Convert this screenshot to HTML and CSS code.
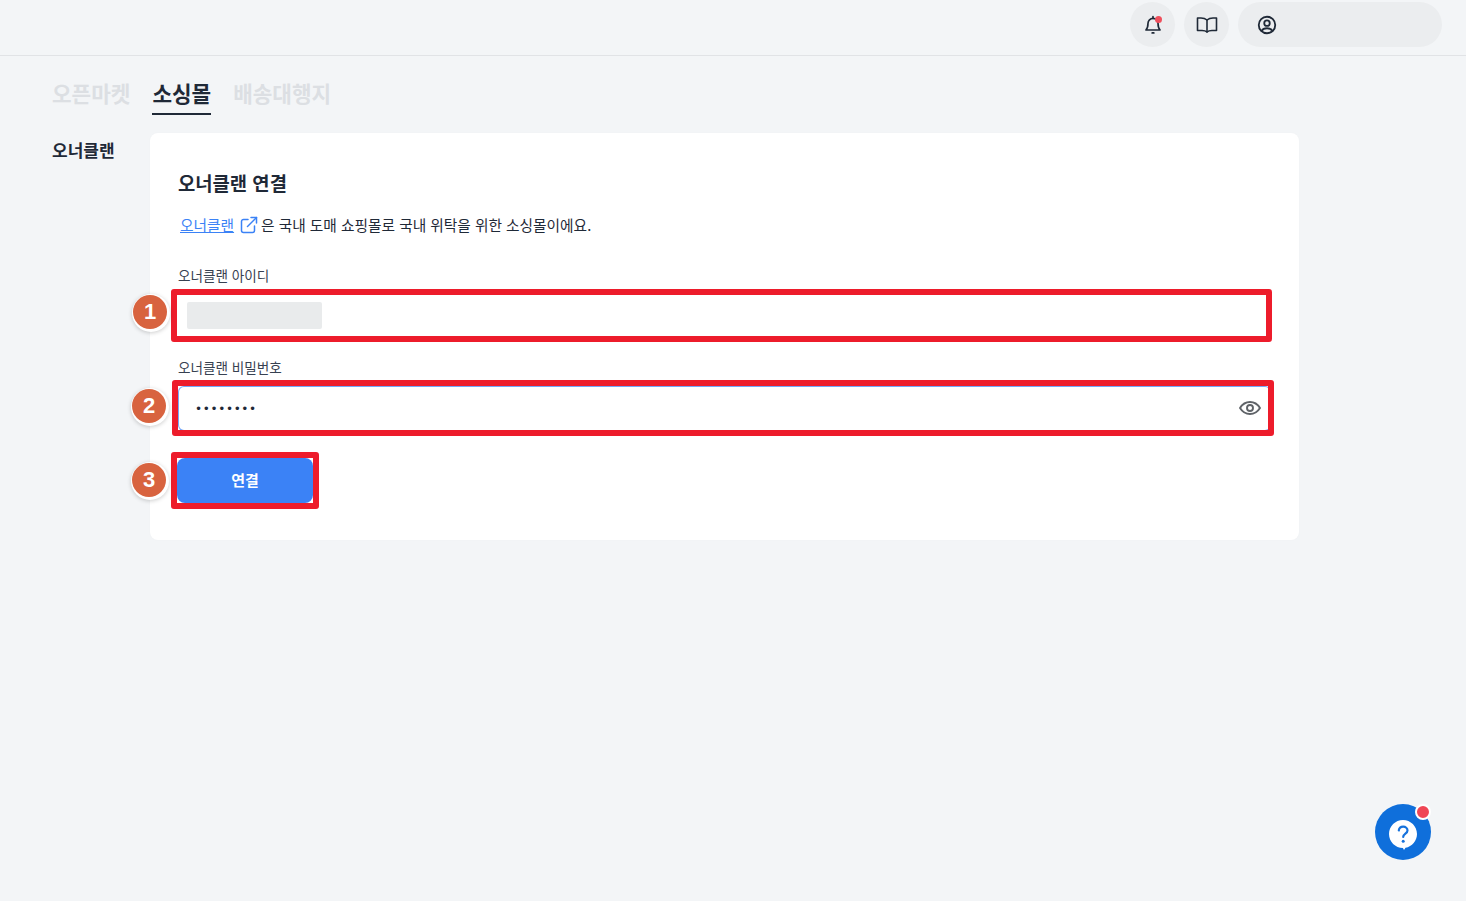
FILE: index.html
```html
<!DOCTYPE html>
<html lang="ko">
<head>
<meta charset="utf-8">
<title>오너클랜 연결</title>
<link rel="stylesheet" href="styles.css">
</head>
<body>
<header class="topbar">
  <button class="round-btn bell" aria-label="알림">
    <svg width="20" height="20" viewBox="0 0 24 24" fill="none" stroke="#1f2937" stroke-width="2" stroke-linecap="round" stroke-linejoin="round"><path d="M12 4a6 6 0 0 0-6 6c0 5-1.500 7-2.500 8h17c-1-1-2.500-3-2.500-8a6 6 0 0 0-6-6z"/><path d="M12 2v2"/><path d="M11 21.500h2"/></svg>
    <span class="bell-dot"></span>
  </button>
  <button class="round-btn" aria-label="가이드">
    <svg width="22" height="16" viewBox="0 0 22 16" fill="none" stroke="#1f2937" stroke-width="1.600" stroke-linecap="round" stroke-linejoin="round"><path d="M11 3C9.500 1.700 7.500 1 5 1H1.500v12.500H6c2 0 3.800.4 5 1.500 1.200-1.100 3-1.500 5-1.500h4.500V1H17c-2.500 0-4.500.7-6 2z"/><path d="M11 3v12"/></svg>
  </button>
  <button class="user-pill" aria-label="계정">
    <svg width="22" height="22" viewBox="0 0 24 24" fill="none" stroke="#1f2937" stroke-width="2" stroke-linecap="round" stroke-linejoin="round"><circle cx="12" cy="12" r="9"/><circle cx="12" cy="10" r="3"/><path d="M6.200 18.500c1-2 3-3 5.800-3s4.800 1 5.800 3"/></svg>
  </button>
</header>

<nav class="tabs">
  <a class="tab">오픈마켓</a>
  <a class="tab active">소싱몰</a>
  <a class="tab">배송대행지</a>
</nav>

<main class="content">
  <aside class="side-label">오너클랜</aside>
  <section class="card">
    <h1 class="card-title">오너클랜 연결</h1>
    <p class="desc">
      <a class="link">오너클랜</a>
      <svg class="ext" width="18" height="18" viewBox="0 0 18 18" fill="none" stroke="#3b82f6" stroke-width="1.500" stroke-linecap="round" stroke-linejoin="round"><path d="M8 3.500H3.500a2 2 0 0 0-2 2v9a2 2 0 0 0 2 2h9a2 2 0 0 0 2-2V10"/><path d="M11 1.500h5.500V7"/><path d="M16.500 1.500L7.500 10.500"/></svg>
      <span>은 국내 도매 쇼핑몰로 국내 위탁을 위한 소싱몰이에요.</span>
    </p>

    <div class="field first">
      <label class="field-label">오너클랜 아이디</label>
      <div class="input">
        <span class="mask"></span>
        <span class="red-box box-1"></span>
        <span class="badge badge-1">1</span>
      </div>
    </div>

    <div class="field second">
      <label class="field-label">오너클랜 비밀번호</label>
      <div class="input focused">
        <span class="dots">••••••••</span>
        <svg class="eye" width="24" height="24" viewBox="0 0 24 24" fill="none" stroke="#5f6368" stroke-width="1.900" stroke-linecap="round" stroke-linejoin="round"><path d="M2 12c2.500-4 6-6 10-6s7.500 2 10 6c-2.500 4-6 6-10 6s-7.500-2-10-6z"/><circle cx="12" cy="12" r="3"/></svg>
        <span class="red-box box-2"></span>
        <span class="badge badge-2">2</span>
      </div>
    </div>

    <div class="action">
      <button class="connect">연결</button>
      <span class="red-box box-3"></span>
      <span class="badge badge-3">3</span>
    </div>
  </section>
</main>

<button class="help" aria-label="도움말">
  <svg width="30" height="32" viewBox="0 0 30 32"><path d="M15 1C7.300 1 1 7.300 1 15s6.300 14 14 14l-.1 0 1.100 2 1.500-2.200C24 27.600 29 21.800 29 15 29 7.300 22.700 1 15 1z" fill="#fff"/><path d="M10.800 11.500c.3-2.400 2-3.800 4.400-3.800 2.400 0 4.300 1.500 4.300 3.700 0 3.200-4.300 3.200-4.300 6.600" fill="none" stroke="#1672dc" stroke-width="2.200" stroke-linecap="round"/><circle cx="15.200" cy="22.300" r="1.500" fill="#1672dc"/></svg>
  <span class="help-dot"></span>
</button>
</body>
</html>
```

FILE: styles.css
```css
* { box-sizing: border-box; }
html, body { margin: 0; padding: 0; height: 100%; }
body {
  background: #f3f5f7;
  color: #1f2937;
  font-family: "Noto Sans CJK KR", "Noto Sans", sans-serif;
  overflow: hidden;
}
button { border: 0; padding: 0; font: inherit; cursor: pointer; }

.topbar {
  height: 56px;
  border-bottom: 1px solid #e1e3e6;
  display: flex;
  justify-content: flex-end;
  align-items: flex-start;
  gap: 9px;
  padding: 2px 24px 0 0;
}
.round-btn {
  position: relative;
  width: 45px;
  height: 45px;
  border-radius: 50%;
  background: #ebedef;
  display: flex;
  align-items: center;
  justify-content: center;
}
.bell-dot {
  position: absolute;
  top: 14px;
  left: 25px;
  width: 7px;
  height: 7px;
  border-radius: 50%;
  background: #ef4f5c;
}
.user-pill {
  width: 204px;
  height: 45px;
  border-radius: 23px;
  background: #ebedef;
  display: flex;
  align-items: center;
  padding-left: 18px;
}

.tabs {
  display: flex;
  gap: 22px;
  padding: 22px 0 0 52px;
  height: 77px;
}
.tab {
  font-size: 21.300px;
  font-weight: 700;
  line-height: 29px;
  height: 37px;
  color: #dcdfe3;
}
.tab.active {
  color: #1f2937;
  border-bottom: 2px solid #1f2937;
}

.content {
  display: flex;
  align-items: flex-start;
  padding-left: 52px;
}
.side-label {
  width: 98px;
  font-size: 17px;
  font-weight: 700;
  line-height: 24px;
  padding-top: 5px;
}
.card {
  width: 1149px;
  height: 407px;
  background: #fff;
  border-radius: 8px;
  padding: 36px 28px 0;
  box-shadow: 0 0 3px rgba(0, 0, 0, 0.02);
}
.card-title {
  margin: 0;
  font-size: 18.800px;
  font-weight: 700;
  line-height: 28px;
}
.desc {
  margin: 16px 0 0;
  padding-left: 2px;
  display: flex;
  align-items: center;
  font-size: 14.700px;
  line-height: 24px;
  color: #1f2937;
}
.link {
  color: #3b82f6;
  text-decoration: underline;
}
.ext { margin: 0 3px 0 6px; }

.field { display: block; }
.field.first { margin-top: 28px; }
.field.second { margin-top: 19px; }
.field-label {
  display: block;
  font-size: 13.600px;
  line-height: 20px;
  color: #374151;
  margin-bottom: 9px;
}
.input {
  position: relative;
  height: 44px;
  width: 1093px;
  background: #fff;
  border-radius: 6px;
  display: flex;
  align-items: center;
  padding-left: 9px;
}
.input.focused {
  height: 45px;
  border: 1px solid rgba(59, 130, 246, 0.7);
  padding-left: 16px;
}
.mask {
  width: 135px;
  height: 27px;
  margin-bottom: 1px;
  background: #e9ebec;
  border-radius: 2px;
}
.dots {
  font-family: "DejaVu Sans", sans-serif;
  font-size: 12px;
  letter-spacing: 0.650px;
  color: #1f2937;
}
.eye { position: absolute; right: 8px; top: 9px; }

.action {
  position: relative;
  margin: 27px 0 0 -1px;
  width: 136px;
  height: 45px;
}
.connect {
  width: 136px;
  height: 45px;
  padding-bottom: 3px;
  background: #3b82f6;
  color: #fff;
  border-radius: 8px;
  font-size: 15px;
  font-weight: 700;
}

.red-box {
  position: absolute;
  border: 6px solid #ed1c2b;
  border-radius: 3px;
  pointer-events: none;
}
.box-1 { left: -7px; top: -5px; width: 1101px; height: 53px; }
.box-2 { left: -7px; top: -7px; width: 1102px; height: 56px; }
.box-3 { left: -6px; top: -6px; width: 148px; height: 57px; }

.badge {
  position: absolute;
  width: 34px;
  height: 34px;
  border-radius: 50%;
  background: #d8633f;
  color: #fff;
  font-family: "Liberation Sans", sans-serif;
  font-size: 22px;
  font-weight: 700;
  line-height: 34px;
  text-align: center;
  box-shadow: 1px 1px 0 2px #fff, 1px 2px 4px 2px rgba(0, 0, 0, 0.2);
}
.badge-1 { left: -45px; top: 1px; }
.badge-2 { left: -47px; top: 2px; }
.badge-3 { left: -45px; top: 5px; }

.help {
  position: absolute;
  left: 1375px;
  top: 804px;
  width: 56px;
  height: 56px;
  border-radius: 50%;
  background: #0f6fdb;
  display: flex;
  align-items: center;
  justify-content: center;
  padding-top: 6px;
}
.help-dot {
  position: absolute;
  top: 0;
  right: 0;
  width: 16px;
  height: 16px;
  border-radius: 50%;
  background: #ef4655;
  border: 2.500px solid #fff;
}
```
